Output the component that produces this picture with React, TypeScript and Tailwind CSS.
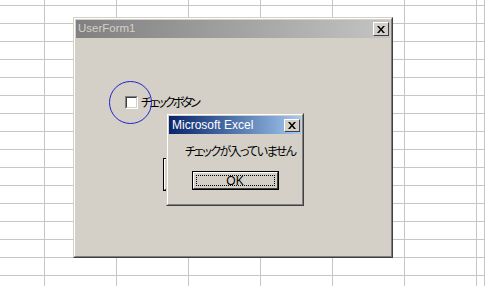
import React from 'react';

const CJK = "font-['Liberation_Sans','Noto_Sans_CJK_JP',sans-serif]";

const CloseGlyph: React.FC = () => (
  <svg width="8" height="7" viewBox="0 0 8 7" className="block">
    <path d="M0 0h2l2 2.5L6 0h2L5 3.5 8 7H6L4 4.5 2 7H0l3-3.5z" fill="#000" />
  </svg>
);

const CloseButton: React.FC<{ h: number }> = ({ h }) => (
  <div
    className={`flex w-[16px] items-center justify-center border border-t-white border-l-white border-r-[#404040] border-b-[#404040] bg-[#d4d0c8] ${
      h === 14 ? 'h-[14px]' : 'h-[13px]'
    }`}
  >
    <CloseGlyph />
  </div>
);

const Sheet: React.FC = () => {
  const cells = Array.from({ length: 17 * 8 });
  return (
    <div className="grid grid-cols-[45px_repeat(6,72px)_1fr] grid-rows-[6px_repeat(16,18px)]">
      {cells.map((_, i) => (
        <div key={i} className="border-r border-b border-[#c6c6c6]" />
      ))}
    </div>
  );
};

export default function App() {
  return (
    <div className={`relative h-[286px] w-[485px] overflow-hidden bg-white ${CJK}`}>
      <Sheet />

      {/* UserForm window */}
      <div className="absolute left-[73px] top-[17px] h-[241px] w-[320px] border border-t-[#d4d0c8] border-l-[#d4d0c8] border-r-[#404040] border-b-[#404040] bg-[#d4d0c8]">
        <div className="flex h-full flex-col border border-t-white border-l-white border-r-[#808080] border-b-[#808080] p-px">
          <div className="flex h-[18px] items-center justify-between bg-linear-to-r from-[#808080] to-[#c4c4c4] pl-[2px] pr-[1px]">
            <span className="text-[11.5px] leading-none text-[#d4d0c8]">UserForm1</span>
            <CloseButton h={14} />
          </div>
          <div className="relative flex-1">
            {/* check box */}
            <div className="absolute left-[49px] top-[58px] flex items-center gap-[3px]">
              <div className="h-[13px] w-[13px] border border-t-[#808080] border-l-[#808080] border-r-white border-b-white bg-white">
                <div className="h-full w-full border border-t-[#404040] border-l-[#404040] border-r-[#d4d0c8] border-b-[#d4d0c8]" />
              </div>
              <span className="whitespace-nowrap text-[12px] leading-none tracking-[-2.3px] text-black [font-feature-settings:'palt']">
                チェックボタン
              </span>
            </div>
            {/* command button (behind message box) */}
            <div className="absolute left-[87px] top-[120px] h-[33px] w-[132px] border border-black bg-[#d4d0c8]">
              <div className="h-full w-full border border-t-white border-l-white border-r-[#404040] border-b-[#404040]" />
            </div>
          </div>
        </div>
      </div>

      {/* annotation circle */}
      <div className="absolute left-[109px] top-[81px] h-[43px] w-[43px] rounded-full border border-[#2020d0]" />

      {/* message box */}
      <div className="absolute left-[166px] top-[113px] h-[93px] w-[138px] border border-t-[#d4d0c8] border-l-[#d4d0c8] border-r-[#404040] border-b-[#404040] bg-[#d4d0c8]">
        <div className="flex h-full flex-col border border-t-white border-l-white border-r-[#808080] border-b-[#808080] p-px">
          <div className="flex h-[18px] items-center justify-between bg-linear-to-r from-[#0a246a] to-[#a6caf0] pl-[3px] pr-[1px]">
            <span className="text-[12px] leading-none text-white">Microsoft Excel</span>
            <CloseButton h={13} />
          </div>
          <div className="flex flex-1 flex-col items-center">
            <p className="mt-[11px] whitespace-nowrap pl-[10px] text-[12px] leading-[14px] tracking-[-1.6px] text-black [font-feature-settings:'palt']">
              チェックが入っていません
            </p>
            <div className="mt-[12px] h-[19px] w-[87px] border border-black bg-[#d4d0c8]">
              <div className="h-full w-full border border-t-white border-l-white border-r-[#404040] border-b-[#404040] p-[2px]">
                <div className="flex h-full items-center justify-center border border-dotted border-black text-[12px] leading-none text-black">
                  OK
                </div>
              </div>
            </div>
          </div>
        </div>
      </div>
    </div>
  );
}
